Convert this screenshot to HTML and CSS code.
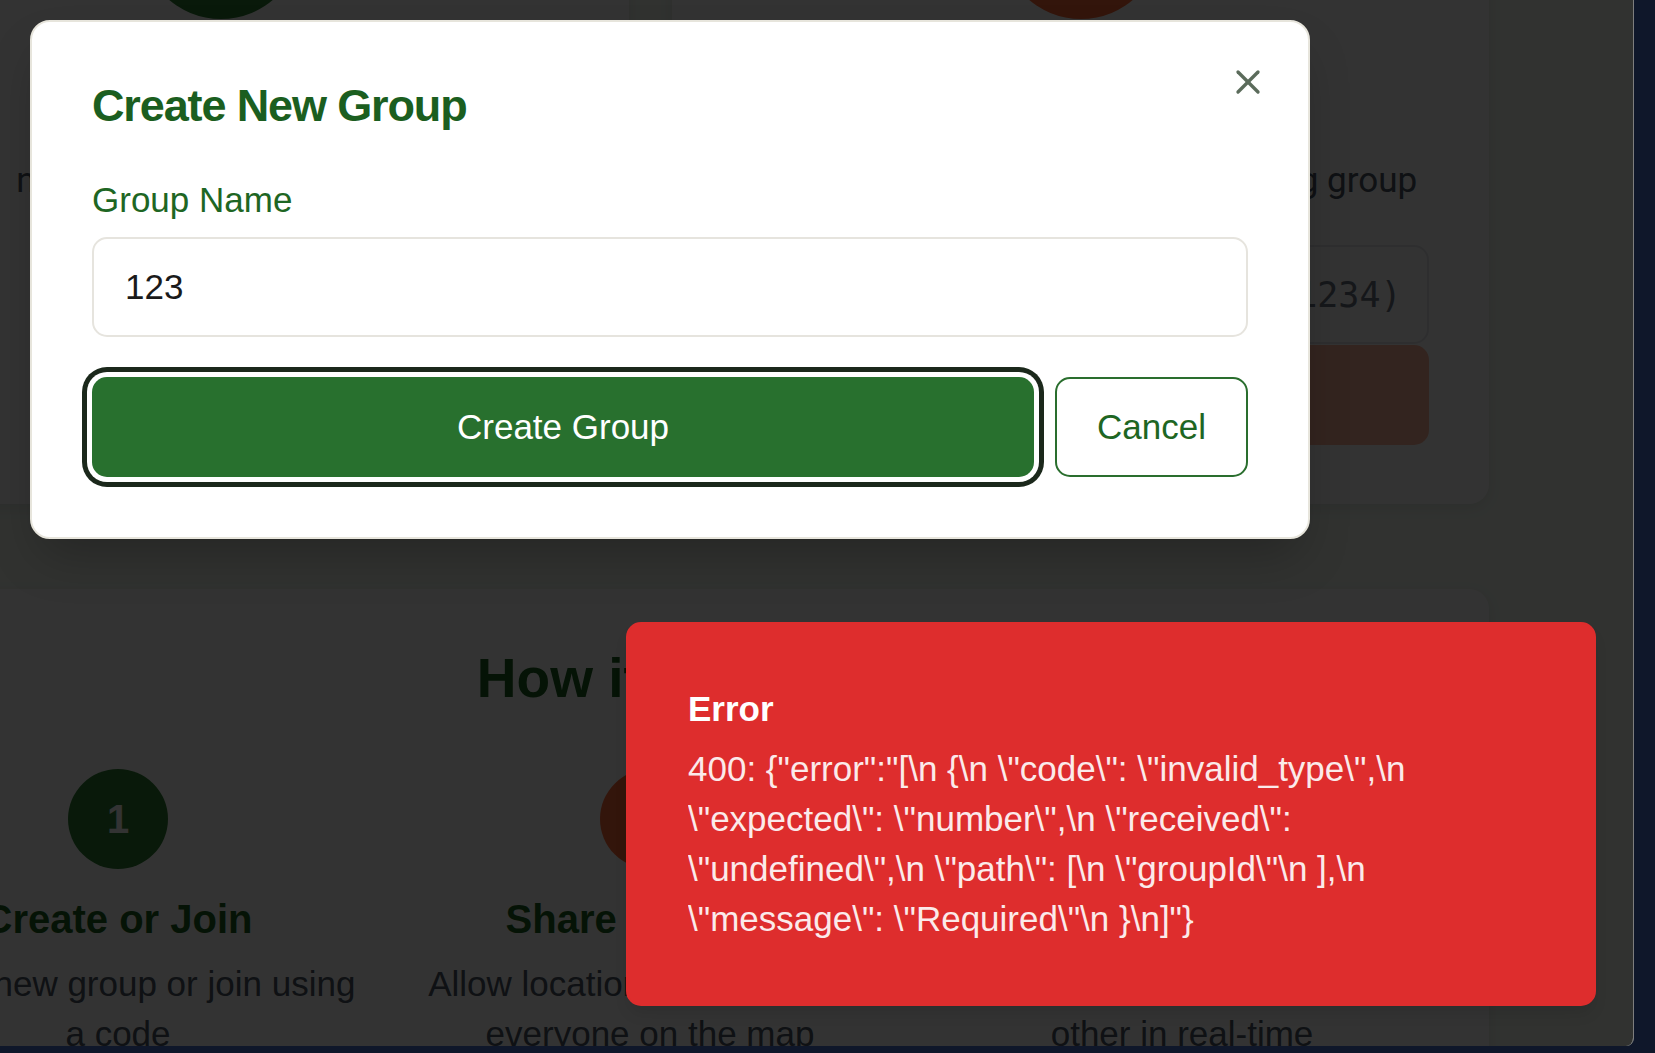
FILE: index.html
```html
<!DOCTYPE html>
<html lang="en">
<head>
<meta charset="utf-8">
<title>Create New Group</title>
<link rel="stylesheet" href="styles.css">
</head>
<body>
<div class="window">
  <main class="page">
    <div class="cards">
      <div class="card">
        <div class="card-icon green"></div>
        <h2 class="card-title">Create Group</h2>
        <p class="card-desc">new group for your friends</p>
        <button class="card-btn-small" type="button">Create Group</button>
      </div>
      <div class="card">
        <div class="card-icon orange"></div>
        <h2 class="card-title">Join Group</h2>
        <p class="card-desc">Enter a group code to join an existing group</p>
        <input class="code-input" type="text" placeholder="Enter 4-digit code (e.g. 1234)">
        <button class="join-btn" type="button" disabled>Join Group</button>
      </div>
    </div>

    <section class="how">
      <h2 class="how-title">How it Works</h2>
      <div class="steps">
        <div class="step">
          <div class="step-num green">1</div>
          <h3 class="step-title">Create or Join</h3>
          <p class="step-desc">Start a new group or join using a code</p>
        </div>
        <div class="step">
          <div class="step-num orange">2</div>
          <h3 class="step-title">Share Location</h3>
          <p class="step-desc">Allow location sharing to see everyone on the map</p>
        </div>
        <div class="step">
          <div class="step-num green">3</div>
          <h3 class="step-title">Stay Connected</h3>
          <p class="step-desc">See everyone and find each other in real-time</p>
        </div>
      </div>
    </section>
  </main>

  <div class="overlay"></div>

  <div class="dialog" role="dialog">
    <button class="close" type="button" aria-label="Close">
      <svg viewBox="0 0 24 24" width="40" height="40" fill="none" stroke="#5b6b5b" stroke-width="2" stroke-linecap="round" stroke-linejoin="round"><path d="M18 6 6 18"/><path d="m6 6 12 12"/></svg>
    </button>
    <h2 class="dialog-title">Create New Group</h2>
    <form class="dialog-form">
      <label class="field-label" for="groupName">Group Name</label>
      <input class="field-input" id="groupName" type="text" value="123">
      <div class="actions">
        <button class="btn-primary" type="button">Create Group</button>
        <button class="btn-outline" type="button">Cancel</button>
      </div>
    </form>
  </div>

  <div class="toast" role="status">
    <div class="toast-title">Error</div>
    <div class="toast-desc">400: {"error":"[\n {\n \"code\": \"invalid_type\",\n \"expected\": \"number\",\n \"received\": \"undefined\",\n \"path\": [\n \"groupId\"\n ],\n \"message\": \"Required\"\n }\n]"}</div>
  </div>
</div>
</body>
</html>
```

FILE: styles.css
```css
* { box-sizing: border-box; }

html, body {
  margin: 0;
  padding: 0;
}

body {
  background: #0f172a;
  width: 1655px;
  height: 1053px;
  overflow: hidden;
  font-family: "Liberation Sans", Arial, sans-serif;
}

.window {
  position: relative;
  width: 1634px;
  height: 1046px;
  overflow: hidden;
  background: #f2f9f0;
  border-right: 1px solid #7d7d7d;
  border-bottom-right-radius: 8px;
}

/* page content (scrolled) */
.page {
  width: 1677px;
  margin: -201px 0 0 -188px;
}

.cards {
  display: grid;
  grid-template-columns: 817px 817px;
  gap: 43px;
}

.card {
  background: #fff;
  border-radius: 20px;
  padding: 60px 60px 59px;
  display: flex;
  flex-direction: column;
  align-items: center;
  font-family: Roboto, "Liberation Sans", sans-serif;
  box-shadow: 0 4px 14px rgba(0, 0, 0, 0.08);
}

.card-icon {
  width: 160px;
  height: 160px;
  border-radius: 50%;
  flex: none;
}

.green { background: #2e7d32; }
.orange { background: #ff6937; }

.card-title {
  margin: 40px 0 0;
  font-size: 45px;
  line-height: 60px;
  color: #1b5e20;
}

.card-desc {
  margin: 37px 0 0;
  font-size: 35px;
  line-height: 50px;
  color: #4b5563;
  text-align: center;
  white-space: nowrap;
}

.card-btn-small {
  margin-top: 39px;
  height: 100px;
  padding: 0 40px;
  border: 0;
  border-radius: 15px;
  background: #2e7d32;
  color: #fff;
  font-family: "Liberation Sans", Arial, sans-serif;
  font-size: 35px;
}

.code-input {
  display: block;
  width: 100%;
  height: 99px;
  margin-top: 39px;
  padding: 0 20px 0 30px;
  border: 2px solid #e5e7eb;
  border-radius: 15px;
  background: #fff;
  font-family: "DejaVu Sans Mono", monospace;
  font-size: 35px;
  text-align: center;
  color: #111;
}

.code-input::placeholder { color: #6b7280; }

.join-btn {
  width: 100%;
  height: 100px;
  margin-top: 1px;
  border: 0;
  border-radius: 15px;
  background: #ff6937;
  opacity: 0.5;
  color: #fff;
  font-family: "Liberation Sans", Arial, sans-serif;
  font-size: 35px;
}

/* How it works */
.how {
  margin-top: 85px;
  background: #fff;
  border-radius: 20px;
  padding: 49px 60px 60px;
  text-align: center;
  box-shadow: 0 4px 14px rgba(0, 0, 0, 0.08);
}

.how-title {
  margin: 0 0 51px;
  font-size: 55px;
  line-height: 80px;
  font-weight: bold;
  color: #1b5e20;
}

.steps {
  display: grid;
  grid-template-columns: repeat(3, 492px);
  gap: 40px;
}

.step {
  display: flex;
  flex-direction: column;
  align-items: center;
}

.step-num {
  width: 100px;
  height: 100px;
  border-radius: 50%;
  display: flex;
  align-items: center;
  justify-content: center;
  color: #fff;
  font-size: 40px;
  font-weight: bold;
  margin-bottom: 20px;
}

.step-title {
  margin: 0 0 10px;
  font-size: 40px;
  line-height: 60px;
  color: #1b5e20;
}

.step-desc {
  margin: 0;
  font-size: 35px;
  line-height: 50px;
  color: #4b5563;
}

/* overlay + dialog */
.overlay {
  position: absolute;
  inset: 0;
  background: rgba(0, 0, 0, 0.8);
}

.dialog {
  position: absolute;
  left: 30px;
  top: 20px;
  width: 1280px;
  background: #fff;
  border: 2px solid #e7e5dc;
  border-radius: 20px;
  padding: 61px 60px 60px;
  box-shadow: 0 25px 50px -12px rgba(0, 0, 0, 0.25);
}

.close {
  position: absolute;
  top: 40px;
  right: 40px;
  width: 40px;
  height: 40px;
  padding: 0;
  border: 0;
  background: none;
  display: flex;
}

.dialog-title {
  margin: 0;
  font-size: 45px;
  line-height: 45px;
  letter-spacing: -1.125px;
  font-weight: bold;
  color: #1b5e20;
}

.dialog-form {
  margin: 54px 0 0;
}

.field-label {
  display: block;
  font-size: 35px;
  line-height: 35px;
  color: #1e6623;
  margin-bottom: 20px;
}

.field-input {
  display: block;
  width: 100%;
  height: 100px;
  padding: 0 31px;
  border: 2px solid #e6e4de;
  border-radius: 15px;
  background: #fff;
  font-family: "Liberation Sans", Arial, sans-serif;
  font-size: 35px;
  color: #1a1a1a;
  outline: none;
}

.actions {
  display: flex;
  gap: 21px;
  margin-top: 40px;
}

.btn-primary {
  flex: 1;
  height: 100px;
  border: 0;
  border-radius: 15px;
  background: #28702e;
  color: #fff;
  font-family: "Liberation Sans", Arial, sans-serif;
  font-size: 35px;
  box-shadow: 0 0 0 5px #fff, 0 0 0 10px #1b281b;
}

.btn-outline {
  height: 100px;
  padding: 0 40px;
  border: 2px solid #2a6e2e;
  border-radius: 15px;
  background: #fff;
  color: #1e6623;
  font-family: "Liberation Sans", Arial, sans-serif;
  font-size: 35px;
}

/* toast */
.toast {
  position: absolute;
  right: 37px;
  bottom: 40px;
  width: 970px;
  display: grid;
  gap: 10px;
  padding: 60px 80px 60px 60px;
  background: #de2d2d;
  border: 2px solid #de2d2d;
  border-radius: 15px;
  color: #fff;
  box-shadow: 0 10px 15px -3px rgba(0, 0, 0, 0.1);
}

.toast-title {
  font-size: 35px;
  line-height: 50px;
  font-weight: bold;
}

.toast-desc {
  font-size: 35px;
  line-height: 50px;
  opacity: 0.9;
}
```
